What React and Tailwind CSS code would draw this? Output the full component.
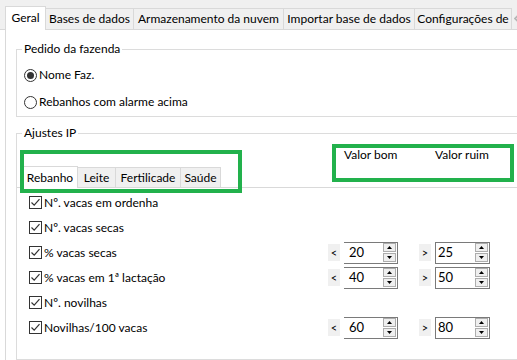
import React from "react";

const font = { fontFamily: 'Lato, "Noto Sans", "Liberation Sans", sans-serif' };

function Check() {
  return (
    <span className="w-[13px] h-[13px] border border-[#333333] bg-white flex items-center justify-center shrink-0">
      <svg width="11" height="11" viewBox="0 0 11 11">
        <path d="M1.5 5.5 L4.2 8.2 L9.5 2.2" fill="none" stroke="#333333" strokeWidth="1.2" />
      </svg>
    </span>
  );
}

function Radio({ on }) {
  return (
    <span className="w-[13px] h-[13px] rounded-full border border-[#333333] bg-white flex items-center justify-center shrink-0">
      {on && <span className="w-[7px] h-[7px] rounded-full bg-[#333333]" />}
    </span>
  );
}

function SpinBtns() {
  return (
    <div className="flex flex-col gap-[1px] mr-[1px]">
      <div className="w-[13px] h-[9px] border border-[#adadad] bg-[#efefef] flex items-center justify-center">
        <svg width="5" height="3" viewBox="0 0 5 3"><polygon points="2.5,0 5,3 0,3" fill="#000" /></svg>
      </div>
      <div className="w-[13px] h-[9px] border border-[#adadad] bg-[#efefef] flex items-center justify-center">
        <svg width="5" height="3" viewBox="0 0 5 3"><polygon points="0,0 5,0 2.5,3" fill="#000" /></svg>
      </div>
    </div>
  );
}

function Spinners({ a, b }) {
  return (
    <div className="flex items-center">
      <span className="w-[12px] h-[17px] bg-[#f0f0f0] flex items-center justify-center text-[11px] leading-none">&lt;</span>
      <div className="ml-[4px] w-[54px] h-[22px] border-y border-r border-[#7a7a7a] bg-white flex items-center justify-between">
        <span className="pl-[5px] text-[13px] leading-none">{a}</span>
        <SpinBtns />
      </div>
      <span className="ml-[21px] w-[12px] h-[17px] bg-[#f0f0f0] flex items-center justify-center text-[11px] leading-none">&gt;</span>
      <div className="ml-[4px] w-[55px] h-[22px] border border-[#7a7a7a] bg-white flex items-center justify-between">
        <span className="pl-[2px] text-[13px] leading-none">{b}</span>
        <SpinBtns />
      </div>
    </div>
  );
}

function Row({ label, spin }) {
  return (
    <div className="flex items-center h-[25px] pl-[12px]">
      <div className="w-[299px] flex items-center gap-[2px]">
        <Check />
        <span className="text-[12px] leading-[16px] whitespace-nowrap">{label}</span>
      </div>
      {spin && <Spinners a={spin[0]} b={spin[1]} />}
    </div>
  );
}

export default function App() {
  const topTabs = [
    ["Bases de dados", "w-[88px]"],
    ["Armazenamento da nuvem", "w-[150px]"],
    ["Importar base de dados", "w-[131px]"],
    ["Configurações de", "w-[97px]"],
  ];
  return (
    <div className="relative w-[517px] h-[360px] overflow-hidden bg-white text-black" style={font}>
      {/* top tab strip */}
      <div className="flex items-end h-[30px] bg-[#f0f0f0] border-b border-[#d9d9d9] pl-[5px]">
        <div className="w-[41px] h-[24px] mb-[-1px] shrink-0 bg-white border-x border-t border-[#d9d9d9] flex items-center justify-center text-[12px] leading-none pb-[1px]">
          Geral
        </div>
        {topTabs.map(([t, w]) => (
          <div
            key={t}
            className={`${w} h-[21px] shrink-0 bg-[#f0f0f0] border-t border-r border-[#d9d9d9] flex items-center justify-center text-[12px] leading-none whitespace-nowrap overflow-hidden`}
          >
            {t}
          </div>
        ))}
        <div className="h-[21px] flex items-center pl-[2px]">
          <svg width="6" height="9" viewBox="0 0 6 9"><path d="M5 0.5 L1 4.5 L5 8.5" fill="none" stroke="#b5b5b5" strokeWidth="1.6" /></svg>
        </div>
      </div>

      {/* panel */}
      <div className="ml-[5px] h-[330px] border-l border-[#d9d9d9] flex flex-col">
        <fieldset className="ml-[10px] mt-[11px] w-[520px] border border-[#dcdcdc] pb-[4px]">
          <legend className="ml-[5px] px-[2px] text-[12px] leading-[16px]">Pedido da fazenda</legend>
          <div className="mt-[8px] ml-[7px] flex items-center gap-[2px] h-[20px]">
            <Radio on />
            <span className="text-[12px] leading-[16px]">Nome Faz.</span>
          </div>
          <div className="mt-[7px] ml-[7px] flex items-center gap-[2px] h-[20px]">
            <Radio />
            <span className="text-[12px] leading-[16px]">Rebanhos com alarme acima</span>
          </div>
        </fieldset>

        <fieldset className="ml-[10px] mt-[8px] w-[520px] h-[260px] border border-[#dcdcdc]">
          <legend className="ml-[5px] px-[2px] text-[12px] leading-[16px]">Ajustes IP</legend>
          <div className="h-[47px] flex items-end border-b border-[#d9d9d9] pl-[5px]">
            <div className="w-[56px] h-[22px] mb-[-1px] bg-white border-x border-t border-[#d9d9d9] flex items-center justify-center text-[12px] leading-none">
              Rebanho
            </div>
            <div className="w-[38px] h-[20px] bg-[#f0f0f0] border-t border-r border-[#d9d9d9] flex items-center justify-center text-[12px] leading-none">
              Leite
            </div>
            <div className="w-[65px] h-[20px] bg-[#f0f0f0] border-t border-r border-[#d9d9d9] flex items-center justify-center text-[12px] leading-none">
              Fertilicade
            </div>
            <div className="w-[40px] h-[20px] bg-[#f0f0f0] border-t border-r border-[#d9d9d9] flex items-center justify-center text-[12px] leading-none">
              Saúde
            </div>
            <div className="self-start mt-[6px] ml-[123px] flex text-[12px] leading-[16px]">
              <span className="w-[91px]">Valor bom</span>
              <span>Valor ruim</span>
            </div>
          </div>
          <div className="pt-[2px]">
            <Row label="Nº. vacas em ordenha" />
            <Row label="Nº. vacas secas" />
            <Row label="% vacas secas" spin={["20", "25"]} />
            <Row label="% vacas em 1ª lactação" spin={["40", "50"]} />
            <Row label="Nº. novilhas" />
            <Row label="Novilhas/100 vacas" spin={["60", "80"]} />
          </div>
        </fieldset>
      </div>

      {/* annotation boxes */}
      <div className="absolute left-[20px] top-[150px] w-[222px] h-[43px] border-4 border-[#22b14c]" />
      <div className="absolute left-[332px] top-[144px] w-[182px] h-[38px] border-4 border-[#22b14c]" />
    </div>
  );
}
